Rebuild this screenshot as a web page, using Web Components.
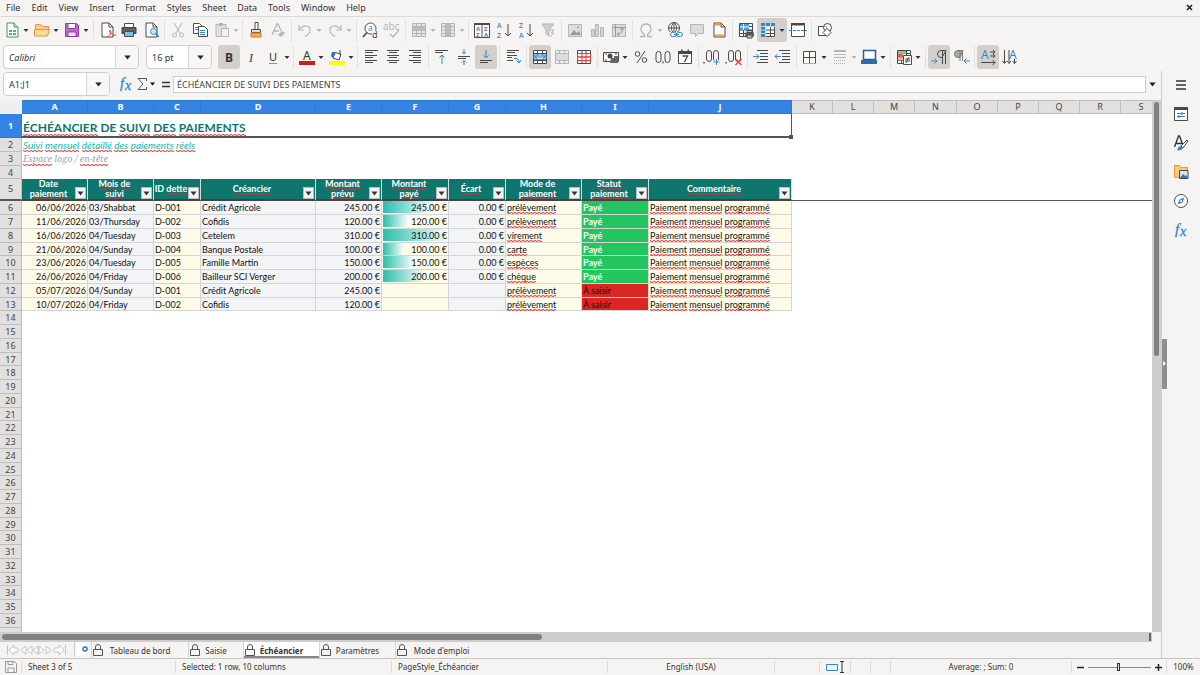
<!DOCTYPE html>
<html lang="en"><head><meta charset="utf-8"><title>Échéancier</title>
<style>body{margin:0;background:#f5f4f2}</style></head><body>
<calc-app></calc-app>
<script>
const TRI='<svg width="7" height="5" viewBox="0 0 7 5"><path d="M0.3 0.5H6.7L3.5 4.6z" fill="currentColor"/></svg>';
const K='#4a4a4a',B='#2f87cc',G='#b5b5b5';
const page=(s)=>`<path d="M5 3h7l4 4v10H5z" fill="#fff" stroke="${s}"/><path d="M12 3v4h4" fill="none" stroke="${s}"/>`;
const lines=(a,c=K)=>a.map(([x,y,w])=>`<path d="M${x} ${y}.5h${w}" stroke="${c}"/>`).join('');
const grid=(c,f='#fff')=>`<path d="M3.500 3.500h13v13h-13z" fill="${f}" stroke="${c}"/><path d="M3.500 6.500h13M3.500 13.500h13M7.500 3.500v13M12.500 3.500v13M3.500 10h13" stroke="${c}" fill="none"/>`;
const ICONS={
new:`<path d="M5 3h7l4 4v10H5z" fill="#fff" stroke="#3a9a55"/><path d="M12 3v4h4" fill="#cfe9d5" stroke="#3a9a55"/><path d="M7 10h7v5H7z" fill="#58b56e"/><path d="M7 12.500h7M10.500 10v5" stroke="#fff"/>`,
open:`<path d="M3.500 15.500v-11h5l2 2h6v3" fill="#f9cf8a" stroke="#e8943a"/><path d="M2.500 9.500h15l-2 6.500h-13z" fill="#fbd999" stroke="#e8943a"/>`,
save:`<path d="M3.500 3.500h11l2 2v11h-13z" fill="#b86cc7" stroke="#8e3fa3"/><path d="M6 3.500h7.500v5H6z" fill="#fff" stroke="#8e3fa3"/><path d="M6 12h8v4.500H6z" fill="#f1dff5" stroke="#8e3fa3"/>`,
pdf:page(K)+`<path d="M10 17c5-2 4-7 3-7s0 6 6 5" fill="none" stroke="#e03a3e"/>`,
print:`<path d="M5.500 3.500h9v4h-9z" fill="#fff" stroke="${K}"/><path d="M3 7.500h14v6H3z" fill="#5a6064" stroke="#3f4447"/><path d="M5.500 11.500h9v5h-9z" fill="#7cc0e8" stroke="${K}"/>`,
preview:page(K)+`<circle cx="12.500" cy="11.500" r="3" fill="#cfe6f6" stroke="${B}"/><path d="M14.800 13.800l3 3" stroke="${B}" stroke-width="1.500"/>`,
cut:`<path d="M6 3l6 10M14 3L8 13" stroke="${G}" fill="none"/><circle cx="6.500" cy="15" r="2" fill="none" stroke="${G}"/><circle cx="13.500" cy="15" r="2" fill="none" stroke="${G}"/>`,
copy:`<path d="M3.500 3.500h6l3 3v7h-9z" fill="#fff" stroke="${K}"/><path d="M8.500 6.500h6l3 3v7h-9z" fill="#fff" stroke="${K}"/>`+lines([[5,7,3],[5,9,3],[10,10,5],[10,12,5],[10,14,5]],B),
paste:`<path d="M4 4.500h10v12H4z" fill="#dedede" stroke="${G}"/><path d="M7 3h4v3H7z" fill="${G}"/><path d="M9.500 8.500h7v8h-7z" fill="#f2f2f2" stroke="${G}"/>`,
brush:`<path d="M9 2.500h3v7H9z" fill="#fff" stroke="${K}"/><path d="M5.500 9.500h9v3h-9z" fill="#ddd" stroke="${K}"/><path d="M5 13h10v4H5z" fill="#f6a95a" stroke="#d97a1d"/>`,
clear:`<path d="M4 15l5-11h1l3 7M6 11h5" fill="none" stroke="${G}" stroke-width="1.300"/><path d="M10 15l4-4 3 2-4 4z" fill="${G}"/>`,
undo:`<path d="M4 5v5h5M4 10c4-6 12-5 11 1-.5 3-3 4.500-5 5.500" fill="none" stroke="${G}" stroke-width="1.200"/>`,
redo:`<path d="M16 5v5h-5M16 10c-4-6-12-5-11 1 .5 3 3 4.500 5 5.500" fill="none" stroke="${G}" stroke-width="1.200"/>`,
find:`<circle cx="10.500" cy="8.500" r="5.500" fill="#fff" stroke="${K}"/><path d="M7 12.500l-4 4.500" stroke="${K}" stroke-width="1.600"/><text x="8" y="11" font-size="8" fill="${B}">a</text><path d="M12 11h6v7h-6z" fill="#f5f4f2"/><text x="12" y="18" font-size="9" fill="${K}">d</text>`,
spell:`<text x="1" y="10" font-size="10" fill="${G}">abc</text><path d="M8 14l3 3 6-7" fill="none" stroke="${G}" stroke-width="1.300"/>`,
row:grid(G,'#e6e6e6')+`<path d="M4 7h12v4H4z" fill="#bbb"/>`,
col:grid(G,'#e6e6e6')+`<path d="M8 4h4v12H8z" fill="#bbb"/>`,
sort:`<path d="M2.500 3.500h15v14h-15z" fill="#fff" stroke="${K}"/><path d="M2 3h16v2H2z" fill="${K}"/><path d="M10 4v13" stroke="${K}"/><g font-size="6" font-weight="700"><text x="4" y="11" fill="${B}">A</text><text x="4" y="17" fill="#a846b9">Z</text><text x="12" y="11" fill="#a846b9">Z</text><text x="12" y="17" fill="${B}">A</text></g>`,
az:`<g font-size="7" font-weight="500"><text x="3" y="8" fill="${B}">A</text><text x="3" y="18" fill="#a846b9">Z</text></g><path d="M14 4v12M11 13l3 3 3-3" fill="none" stroke="${K}"/>`,
za:`<g font-size="7" font-weight="500"><text x="3" y="8" fill="#a846b9">Z</text><text x="3" y="18" fill="${B}">A</text></g><path d="M14 4v12M11 13l3 3 3-3" fill="none" stroke="${K}"/>`,
filter:`<path d="M4 4h12l-5 6v6l-3-2v-4z" fill="#d0d0d0" stroke="${G}"/><path d="M12 10l4 0-3 3 3 0-4 4" fill="none" stroke="${G}"/>`,
image:`<path d="M3.500 4.500h13v12h-13z" fill="#dedede" stroke="${G}"/><path d="M5 15l4-5 3 3 2-2 2 4z" fill="#999"/><circle cx="13" cy="7.500" r="1" fill="#999"/>`,
chart:`<path d="M4.500 9.500h3v7h-3zM8.500 4.500h3v12h-3zM13.500 7.500h3v9h-3z" fill="#d4d4d4" stroke="${G}"/>`,
pivot:`<path d="M3.500 4.500h13v12h-13z" fill="#dedede" stroke="${G}"/><path d="M3.500 7.500h13M6.500 4.500v12M9 14c4 0 4-2 4-5M11 10l2-2 2 2M10 12l-2 2 2 2" fill="none" stroke="#999"/>`,
omega:`<path d="M4 16.500h4.500v-2C3 11 4.500 4 10 4s7 7 1.500 10.500v2H16" fill="none" stroke="${G}" stroke-width="1.300"/>`,
link:`<circle cx="9" cy="8" r="5.500" fill="#fff" stroke="${K}"/><path d="M3.500 8h11M9 2.500v11M9 2.500c-3.500 3-3.500 8 0 11M9 2.500c3.500 3 3.500 8 0 11" fill="none" stroke="${K}"/><path d="M5 12h13v5H5z" fill="#f5f4f2"/><rect x="5.500" y="12.500" width="6" height="4" rx="2" fill="none" stroke="${B}"/><rect x="11.500" y="12.500" width="6" height="4" rx="2" fill="none" stroke="${B}"/><path d="M9 14.500h5" stroke="${B}"/>`,
comment:`<path d="M3.500 4.500h13v9h-5l-3 3v-3h-5z" fill="#dcdcdc" stroke="${G}"/>`,
header:page(K)+`<path d="M6 4.500h6M6 15.500h9" stroke="#f29a3a" stroke-width="2"/>`,
printarea:grid(K)+`<path d="M4 4h9v6H4z" fill="#4b9cdb"/><path d="M4 7h9M7.500 4v6" stroke="#fff"/><path d="M9 12.500h9v4H9z" fill="#5a6064"/><path d="M11 10.500h5v2h-5zM11 15h5v3h-5z" fill="#9fd0ef" stroke="${K}"/>`,
freeze:grid(K)+`<path d="M3 3h14v4H3zM3 3h4.500v14H3z" fill="#2f87cc"/><path d="M3 10h4.500M3 13.500h4.500M12.500 3v4M3 6.500h14M7.500 3v14" stroke="#fff" stroke-width=".7"/>`,
split:`<path d="M3.500 3.500h13v13h-13z" fill="#fff" stroke="${K}"/><path d="M3 3h14v2.500H3z" fill="${K}"/><path d="M1 10.500h18" stroke="${B}" stroke-dasharray="3 1"/>`,
shapes:`<path d="M3.500 6.500h8v9h-8z" fill="#fff" stroke="${K}"/><circle cx="12.500" cy="7.500" r="4" fill="#fff" fill-opacity=".6" stroke="${K}"/><path d="M12 8.500l4 4-4 4-4-4z" fill="#fff" stroke="${K}"/>`,
bold:`<text x="6" y="14.500" font-size="12" font-weight="700" fill="#333">B</text>`,
italic:`<text x="8" y="14.500" font-size="12" font-style="italic" font-family="Liberation Serif" fill="#333">I</text>`,
underline:`<text x="6" y="13.500" font-size="11" fill="#333">U</text><path d="M6 16.500h8" stroke="#58a5dc"/>`,
fontcolor:`<text x="6" y="13" font-size="12" fill="#333">A</text><path d="M2 14h16v4H2z" fill="#c9211e"/>`,
fill:`<path d="M8 5.500l6 1.500-2 6-6-2z" fill="#fff" stroke="${K}"/><path d="M5 5l4 0-3 6-2-2z" fill="#2f72b5"/><path d="M13 3v5" stroke="${K}"/><path d="M2 14h16v4H2z" fill="#ff0"/>`,
left:lines([[4,3,13],[4,5,8],[4,8,12],[4,10,8],[4,13,12],[4,15,8]]),
center:lines([[4,3,12],[6,5,8],[4,8,12],[6,10,8],[4,13,12],[6,15,8]]),
right:lines([[4,3,12],[8,5,8],[4,8,12],[8,10,8],[4,13,12],[8,15,8]]),
top:lines([[3,3,13],[3,5,8]])+`<path d="M10 17V8M7.500 10.500L10 8l2.500 2.500" fill="none" stroke="${B}"/>`,
middle:lines([[4,9,12],[4,11,8]])+`<path d="M10 2v5M8 5l2 2 2-2M10 18v-4M8 15.500l2-2 2 2" fill="none" stroke="${B}"/>`,
bottom:lines([[4,13,12],[4,15,8]])+`<path d="M10 3v8M7.500 8.500L10 11l2.500-2.500" fill="none" stroke="${B}"/>`,
wrap:lines([[4,3,12],[4,5,8],[4,8,10],[4,10,5],[4,13,6]])+`<path d="M11 11.500h2c2 0 3 1 3 4M13.500 13.500l2.500 2.500 2-3" fill="none" stroke="${B}"/>`,
merge:grid(K)+`<path d="M4 8h12v4.500H4z" fill="#d6ebfa" stroke="${B}"/><path d="M5 10h10M7 8.500L5 10l2 1.500M13 8.500l2 1.500-2 1.500" fill="none" stroke="${B}"/>`,
merge2:grid(G,'#f0f0f0')+`<path d="M4 7h12v6H4z" fill="#dcdcdc"/>`,
unmerge:`<path d="M3.500 3.500h13v13h-13z" fill="#fff" stroke="${K}"/><path d="M3.500 6.500h13M8 3.500v3M12 3.500v3M8 13.500v3M12 13.500v3" stroke="${K}"/><path d="M3.500 6.500h13v3.500h-13zM3.500 10h13v3.500h-13zM8 6.500v7M12 6.500v7" fill="none" stroke="#d9413c"/>`,
currency:`<path d="M2.500 5.500h15v9h-15z" fill="#fff" stroke="${K}"/><circle cx="9" cy="9" r="2.500" fill="${K}"/><path d="M10 11h3v-2h4v7h-8z" fill="#666"/><path d="M4 7h2M4 13h2M14 7h2" stroke="${K}"/>`,
percent:`<circle cx="6.500" cy="7" r="2.300" fill="none" stroke="${K}"/><circle cx="13.500" cy="13" r="2.300" fill="none" stroke="${K}"/><path d="M14 4L6 16" stroke="${K}"/>`,
num:`<rect x="3" y="4.500" width="5" height="11" rx="2.500" fill="none" stroke="${K}"/><rect x="12" y="4.500" width="5" height="11" rx="2.500" fill="none" stroke="${K}"/><path d="M10 14v2.500" stroke="${K}"/>`,
date:`<path d="M3.500 4.500h13v12h-13z" fill="#fff" stroke="${K}"/><path d="M3 4h14v3H3zM6 2.500h1.500v3H6zM12.500 2.500H14v3h-1.500z" fill="${K}"/><path d="M7.500 9h5l-3 6" fill="none" stroke="${K}" stroke-width="1.300"/>`,
adddec:`<path d="M2 15v1.500" stroke="${K}" stroke-width="1.500"/><rect x="4.500" y="3.500" width="5" height="11" rx="2.500" fill="none" stroke="${K}"/><rect x="11.500" y="3.500" width="5" height="11" rx="2.500" fill="none" stroke="${K}"/><path d="M11 15h7M14.500 11.500v7" stroke="#f5f4f2" stroke-width="3"/><path d="M11.500 15h6M14.500 12v6" stroke="${B}"/>`,
deldec:`<path d="M2 15v1.500" stroke="${K}" stroke-width="1.500"/><rect x="4.500" y="3.500" width="5" height="11" rx="2.500" fill="none" stroke="${K}"/><rect x="11.500" y="3.500" width="5" height="11" rx="2.500" fill="none" stroke="${K}"/><path d="M11.500 12l6 6M17.500 12l-6 6" stroke="#e03a3e" stroke-width="1.200"/>`,
indent:lines([[6,3,11],[9,6,8],[9,9,8],[9,12,8],[6,15,11]])+`<path d="M2 9.500h6M5.500 7L8 9.500 5.500 12" fill="none" stroke="${B}"/>`,
outdent:lines([[6,3,11],[9,6,8],[9,9,8],[9,12,8],[6,15,11]])+`<path d="M2 9.500h6M4.500 7L2 9.500 4.500 12" fill="none" stroke="${B}"/>`,
borders:`<path d="M3.500 4.500h12v12h-12zM9.500 4.500v12M3.500 10.500h12" fill="#fff" stroke="${K}"/><path d="M3 16.500h13" stroke="#f29a3a"/>`,
linestyle:lines([[4,3,12],[4,4,12],[4,7,12],[4,10,12]],G)+`<path d="M4 13.500h12M4 16.500h12" stroke="${G}" stroke-dasharray="1 1"/>`,
bordercolor:`<path d="M4.500 3.500h12v9h-12z" fill="#fff" stroke="#2a5f93" stroke-width="1.500"/><path d="M2 13h16v4H2z" fill="#2a6db0"/>`,
cond:grid(K)+`<path d="M4 4h8v3H4z" fill="#7cc98c"/><path d="M4 7h5v3H4z" fill="#e2625d"/><path d="M4 10.500h5v3H4z" fill="#f0b0ac"/><path d="M9.500 8.500h8v9h-8z" fill="#fff" stroke="${K}"/><path d="M11 12h5M11 14h5M15 10l-3 6" stroke="${K}"/>`,
ltr:`<path d="M17 3.500H12a3 3 0 0 0 0 7h1zM13.500 4v13M16.500 4v13" fill="none" stroke="${K}"/><path d="M2 14h6M5.500 11.500L8 14l-2.500 2.500" fill="none" stroke="${B}"/>`,
rtl:`<path d="M12 3.500H7a3 3 0 0 0 0 7h2z" fill="#aaa" stroke="#777"/><path d="M9 4v10M11.500 4v10" stroke="#777"/><path d="M13 14h6M15.500 11.500L13 14l2.500 2.500" fill="none" stroke="${B}"/>`,
hdir:`<text x="3" y="12" font-size="12" fill="${B}">A</text><path d="M12 5h5M12 9h5M3 15.500h14M15 3l2 2-2 2M15 7l2 2-2 2M14.500 13l2.500 2.500-2.500 2.500" fill="none" stroke="${K}"/>`,
vdir:`<text x="9" y="12" font-size="12" fill="${B}">A</text><path d="M4.500 3v13M9 3v13M14.500 12v5M2.500 14l2 2.500 2-2.500M7 14l2 2.500 2-2.500M12.500 14l2 2.500 2-2.500" fill="none" stroke="${K}"/>`,
fx:`<text x="4" y="14" font-size="15" font-style="italic" font-family="Liberation Serif" stroke="${B}" stroke-width=".3" fill="${B}">f</text><text x="9" y="16" font-size="14" font-style="italic" font-family="Liberation Serif" stroke="${B}" stroke-width=".3" fill="${B}">x</text>`,
sigma:`<path d="M14.500 7V4.500H6l5 5.500-5 5.500h8.500V13" fill="none" stroke="#555"/>`,
equal:`<path d="M6 8.500h8M6 12.500h8" stroke="#333" stroke-width="1.500"/>`,
menu:`<path d="M5 6h10M5 10h10M5 14h10" stroke="#333" stroke-width="1.500"/>`,
props:`<path d="M3.500 3.500h13v13h-13z" fill="#fff" stroke="${K}"/><path d="M3 3h14v3H3z" fill="${K}"/><path d="M6 9.500h8M6 12.500h8M11 8v3M8 11v3" stroke="${B}"/>`,
styles:`<path d="M3.500 14l4-11h1l3 8M5 10.500h6" fill="none" stroke="#333" stroke-width="1.400"/><path d="M10 13l6-6 1 1-5 7z" fill="#fff" stroke="${K}"/><path d="M6 17c1-1 1-4 4-4l2 2c-1 2-4 3-6 2z" fill="${B}"/>`,
gallery:`<path d="M3.500 15.500v-12h5l2 2h6v10z" fill="#f9c87a" stroke="#e8943a"/><path d="M8.500 8.500h8.500v8H8.500z" fill="#cfe6f6" stroke="${K}"/><path d="M9 16l3-4 2 2 1-1 2 3z" fill="#2f72b5"/>`,
nav:`<circle cx="10" cy="10" r="6.500" fill="#fff" stroke="${K}"/><path d="M13.500 6.500l-2 5-5 2 2-5z" fill="${B}"/><circle cx="10" cy="10" r="1" fill="#fff"/>`,
lock:`<path d="M5.500 9.500h9v6h-9z" fill="none" stroke="#555"/><path d="M7.500 9V7a2.500 2.500 0 0 1 5 0v2" fill="none" stroke="#555"/>`,
floppy:`<path d="M4.500 4.500h9l2 2v9h-11z" fill="none" stroke="#999"/><path d="M7 4.500h5v3H7zM7 11h6v4.500H7z" fill="none" stroke="#999"/>`
};
const def=(n,html)=>customElements.define(n,class extends HTMLElement{
 constructor(){super();this.attachShadow({mode:'open'})}
 connectedCallback(){this.shadowRoot.innerHTML=typeof html==='function'?html(this):html}});
def('ui-icon',e=>`<style>:host{display:block;width:20px;height:20px;font-family:"Noto Sans",sans-serif}svg{display:block}</style><svg width="20" height="20" viewBox="0 0 20 20" aria-hidden="true">${ICONS[e.getAttribute('name')]}</svg>`);
def('tool-button',e=>{const s=e.hasAttribute('split');return`<style>:host{display:block;flex:none}
button{all:unset;box-sizing:border-box;display:flex;align-items:center;height:24px;width:${s?(e.hasAttribute('compact')?29:30):22}px;padding-left:1px;border-radius:3px;color:${e.hasAttribute('off')?'#b5b5b5':'#333'}}
:host([on]) button{background:#d3d0cc}svg{display:block;flex:none}</style><button type="button" aria-label="${e.getAttribute('name')}"><ui-icon name="${e.getAttribute('name')}"></ui-icon>${s?'<svg width="7" height="5" viewBox="0 0 7 5"><path d="M1.500 1h5L4 4z" fill="currentColor"/></svg>':''}</button>`});
def('tool-sep','<style>:host{display:block;flex:none;width:5px}i{display:block;width:1px;height:22px;margin-left:2px;background:#e3e1df}</style><i></i>');
def('tool-row',`<style>:host{display:flex;align-items:center;flex:none;overflow:hidden}</style><slot></slot>`);
def('combo-box',e=>`<style>:host{display:block;flex:none;width:var(--w)}
div{box-sizing:border-box;display:flex;height:24px;border:1px solid #cfccc9;border-radius:4px;background:#fff;overflow:hidden}
input{all:unset;flex:1;min-width:0;padding-left:5px;font:var(--st,normal) 9px "Noto Sans",sans-serif;color:#2e3436}
button{all:unset;flex:none;width:22px;border-left:1px solid #d8d5d2;background:#f8f7f6;display:grid;place-items:center;color:#222}</style>
<div><input aria-label="${e.getAttribute('label')}" value="${e.getAttribute('value')}"><button type="button" aria-label="Open ${e.getAttribute('label')}">${TRI}</button></div>`);
def('menu-bar',`<style>:host{display:flex;align-items:center;height:16px;padding:0 6px;border-bottom:1px solid #dddbd9;flex:none;font:9px/16px "Noto Sans",sans-serif;color:#333}
nav{display:flex;gap:11px;flex:1}button{all:unset}.x{width:8px}</style>
<nav>${'File Edit View Insert Format Styles Sheet Data Tools Window Help'.split(' ').map(t=>`<button>${t}</button>`).join('')}</nav><button class="x" aria-label="Close"><svg width="7" height="7" viewBox="0 0 7 7"><path d="M1 1l5 5M6 1L1 6" stroke="#222" stroke-width="1.600"/></svg></button>`);
const btns=s=>s.trim().split(/\s+/).map(t=>{if(t==='|')return'<tool-sep></tool-sep>';const[n,...f]=t.split('.');
 return`<tool-button name="${n}" ${f.join(' ')}></tool-button>`}).join('');
def('formula-bar',`<style>:host{display:flex;align-items:center;height:26px;padding-left:3px;flex:none}
.f{all:unset;box-sizing:border-box;flex:1;min-width:0;height:17px;border:1px solid #cfccc9;background:#fff;padding-left:3px;font:9px "Noto Sans",sans-serif;color:#444}
button{all:unset;display:grid;place-items:center;width:16px;height:20px;color:#222;flex:none}.d{width:8px}.g{margin-left:6px}.q{width:17px}.e{width:13px;margin-right:2px}</style>
<combo-box label="Name box" value="A1:J1" style="--w:107px"></combo-box>
<button class="g" aria-label="Function wizard"><ui-icon name="fx"></ui-icon></button><button aria-label="Sum"><ui-icon name="sigma"></ui-icon></button><button class="d" aria-label="More sums"><svg width="5" height="4"><path d="M0 .5h5L2.500 3.500z"/></svg></button><button class="q" aria-label="Formula"><ui-icon name="equal"></ui-icon></button>
<input class="f" aria-label="Input line" value="ÉCHÉANCIER DE SUIVI DES PAIEMENTS"><button class="e" aria-label="Expand">${TRI}</button>`);
const COLS=[66,66,47,115,66,67,57,76,67,143,41,41,41,42,41,41,41,41,41];
const TOTAL=22+COLS.reduce((a,b)=>a+b);
const LET='ABCDEFGHIJKLMNOPQRS';
const sp=t=>t.split(' ').map(w=>`<u>${w}</u>`).join(' ');
const HEAD=['Date<br><u>paiement</u>','<u>Mois</u> <u>de</u><br><u>suivi</u>','ID <u>dette</u>',sp('Créancier'),'<u>Montant</u><br><u>prévu</u>','<u>Montant</u><br><u>payé</u>',sp('Écart'),'Mode de<br><u>paiement</u>','<u>Statut</u><br><u>paiement</u>',sp('Commentaire')];
const DATA=[['06/06/2026','03/Shabbat','D-001','Crédit Agricole','245.00 €','245.00 €','0.00 €','prélèvement'],
['11/06/2026','03/Thursday','D-002','Cofidis','120.00 €','120.00 €','0.00 €','prélèvement'],
['16/06/2026','04/Tuesday','D-003','Cetelem','310.00 €','310.00 €','0.00 €','virement'],
['21/06/2026','04/Sunday','D-004','Banque Postale','100.00 €','100.00 €','0.00 €','carte'],
['23/06/2026','04/Tuesday','D-005','Famille Martin','150.00 €','150.00 €','0.00 €','espèces'],
['26/06/2026','04/Friday','D-006','Bailleur SCI Verger','200.00 €','200.00 €','0.00 €','chèque'],
['05/07/2026','04/Sunday','D-001','Crédit Agricole','245.00 €','','','prélèvement'],
['10/07/2026','04/Friday','D-002','Cofidis','120.00 €','','','prélèvement']];
const dataRow=r=>r.map((v,i)=>{const bar=i===5&&v?` style="--bar:${Math.round(parseFloat(v)/310*100)}%"`:'';
 return`<td class="${[0,2,5,7].includes(i)?'in':'calc'}${[0,4,5,6].includes(i)?' r':''}${bar?' bar':''}"${bar}>${i===7?sp(v):v}</td>`}).join('')
 +(r[5]?'<td class="ok">Payé</td>':'<td class="ko">À saisir</td>')+`<td class="in">${sp('Paiement mensuel programmé')}</td><td colspan="9"></td>`;
def('sheet-grid',()=>{let rows='';
 for(let n=1;n<=37;n++){let c='<td colspan="19"></td>';
  if(n===1)c=`<td colspan="10" class="title">${sp('ÉCHÉANCIER')} DE ${sp('SUIVI DES PAIEMENTS')}<i></i></td><td colspan="9"></td>`;
  if(n===2)c=`<td colspan="19" class="sub">${sp('Suivi mensuel détaillé des paiements réels')}</td>`;
  if(n===3)c=`<td colspan="19" class="logo"><u>Espace</u> logo / <u>en-tête</u></td>`;
  if(n===5)c=HEAD.map((h,i)=>`<td class="h"><div><span>${h}</span><button aria-label="Filter ${LET[i]}"><svg width="7" height="5" viewBox="0 0 7 5"><path d="M0.5 0.5h6L3.500 4.500z" fill="#333"/></svg></button></div></td>`).join('')+'<td colspan="9" class="fz"></td>';
  if(n>5&&n<14)c=dataRow(DATA[n-6]);
  rows+=`<tr class="${n<6?'r'+n:n%4===1?'s':'n'}"><th scope="row">${n<37?n:''}</th>${c}</tr>`}
 return`<style>:host{display:block;flex:1;min-width:0;overflow:hidden;background:#fff;font:9px/12px Lato,sans-serif;color:#111}
table{table-layout:fixed;border-spacing:0;width:${TOTAL}px}
td,th{box-sizing:border-box;padding:0 1px;white-space:nowrap;overflow:visible;vertical-align:middle}
th{font:9px/12px "Noto Sans",sans-serif;color:#444;background:#e1e0df;border:0 solid #bfbebd;border-right-width:1px;border-bottom-width:1px;padding:0}
thead tr{height:14px}thead th{border-top-width:1px}.sel{background:#3584e4;color:#fff;font-weight:700;border-color:#2f78d0}.corner{background:#f0efee;border:0}
.r1{height:24px}.r2,.r3,.n{height:14px}.r4,.s{height:13px}.r5{height:22px}.r1 th{background:#3584e4;color:#fff;font-weight:700;border-color:#2f78d0}
.s td,.s th,.r4 th{line-height:11px}
u{text-decoration:none;padding-bottom:1px;background:url("data:image/svg+xml,%3Csvg xmlns='http://www.w3.org/2000/svg' width='4' height='2'%3E%3Cpath d='M0 .5L2 1.500L4 .5' fill='none' stroke='%23e22' stroke-width='1'/%3E%3C/svg%3E") repeat-x left bottom}
.title{position:relative;border-right:1px solid #555;border-bottom:2px solid #555;font:700 12px/16px Lato,sans-serif;color:#0f766e;padding-top:6px}
.title i{position:absolute;right:-2px;bottom:-3px;width:4px;height:4px;background:#555}
.sub{font-style:italic;font-size:10px;color:#14b8a6}.logo{font:italic 9px/12px "Noto Serif","Liberation Serif",serif;color:#9ca3af}
.h{background:#0f766e;color:#fff;font-weight:700;line-height:10px;text-align:center;border-right:1px solid #cfe0de;border-bottom:2px solid #444;padding:0}
.h div{display:grid;grid-template-columns:1fr 12px;align-items:end;height:20px;overflow:hidden}.h span{align-self:center}
.h button{all:unset;box-sizing:border-box;width:11px;height:12px;background:#f4f4f4;border:1px solid #bbb;display:grid;place-items:center}
.fz{border-bottom:1px solid #555}.r5 th{border-bottom:2px solid #555}
.in,.calc{border-right:1px solid #d3d5d8;border-bottom:1px solid #d3d5d8}.in{background-color:#fffbe9}.calc{background-color:#f3f4f6}.r{text-align:right}
.bar{background:linear-gradient(90deg,#2bbfae,#ffffffd0) 1px 0/var(--bar) 12px no-repeat,#fffbe9}
.ok{background:#22c55e;color:#fff;font-weight:700;border-bottom:1px solid #d3d5d8;border-right:1px solid #d3d5d8}.ko{background:#dc2626;color:#111;border-bottom:1px solid #d3d5d8;border-right:1px solid #d3d5d8}
</style><table><colgroup><col style="width:22px">${COLS.map(w=>`<col style="width:${w}px">`).join('')}</colgroup>
<thead><tr><th class="corner"></th>${[...LET].map((l,i)=>`<th scope="col" class="${i<10?'sel':''}">${l}</th>`).join('')}</tr></thead><tbody>${rows}</tbody></table>`});
def('sheet-tabs',`<style>:host{display:flex;height:16px;flex:none;font:8px/15px "Noto Sans",sans-serif;color:#333}
.nav{display:flex;align-items:center;width:74px;box-sizing:border-box;padding-left:6px}.add{all:unset;width:16px;height:15px;border-left:1px solid #ccc}
button.t{all:unset;display:flex;align-items:center;box-sizing:border-box;height:16px;padding-right:14px;border-left:1px solid #d8d6d4}
.t span{flex:1;text-align:center}.t ui-icon{margin:-3px -2px -3px -4px}.t.on{background:#fff;font-weight:700;box-shadow:inset 0 -2px #888}</style>
<div class="nav"><svg width="60" height="12" viewBox="0 0 60 12" fill="#fff" stroke="#c4c4c4"><path d="M1.500 1v10M3 6l5-5v3h4v4H8v3zM15 6l5-4v8zM21 6l5-4v8zM27 6l5-4v8zM33 2l5 4-5 4zM40 2l5 4-5 4zM58 6l-5-5v3h-5v4h5v3zM59.500 1v10"/></svg></div>
<button class="add" aria-label="Add sheet"><svg width="14" height="15" viewBox="0 0 14 15"><path d="M1 0h9v14H1z" fill="#fff"/><circle cx="10" cy="7" r="2" fill="none" stroke="#2f72b5" stroke-width="1.500"/></svg></button>
${[['Tableau de bord',97],['Saisie',55],['Échéancier',76],['Paramètres',76],["Mode d'emploi",92]].map(([t,w],i)=>`<button class="t ${i===2?'on':''}" style="width:${w}px"><ui-icon name="lock"></ui-icon><span>${t}</span></button>`).join('')}`);
def('status-bar',`<style>:host{display:flex;align-items:center;height:17px;flex:none;border-top:1px solid #c6c4c2;box-sizing:border-box;font:8px/15px "Noto Sans",sans-serif;color:#333}
div{box-sizing:border-box;height:12px;line-height:12px;border-right:1px solid #dedcda;padding-left:6px;flex:none}
input{all:unset;-webkit-appearance:none;appearance:none;width:63px;height:11px;background:linear-gradient(#888,#888) 0 5px/100% 1px no-repeat}
input::-webkit-slider-thumb{-webkit-appearance:none;width:3px;height:8px;box-sizing:border-box;border:1px solid #333;background:#ddd}
.z{flex:1;min-width:0;display:flex;align-items:center;gap:4px;padding:0;justify-content:center}.c{text-align:center;padding:0}button{all:unset;display:grid}.i ui-icon{margin:-4px 0 -4px 1px}</style>
<div class="i" style="width:22px;padding:0">
<ui-icon name="floppy"></ui-icon></div><div style="width:154px">Sheet 3 of 5</div><div style="width:216px">Selected: 1 row, 10 columns</div><div style="width:216px">PageStyle_Échéancier</div><div class="c" style="width:167px">English (USA)</div><div style="width:45px"></div><div style="width:31px"><svg width="21" height="12" viewBox="0 0 21 12" fill="none"><path d="M.5 3.500h11v6H.5z" stroke="#2f87cc"/><path d="M14 .5h4M16 .5v11M14 11.500h4" stroke="#333"/></svg></div><div style="width:20px"></div><div style="width:20px"></div><div class="c" style="width:181px">Average: ; Sum: 0</div>
<div class="z"><button aria-label="Zoom out"><svg width="7" height="7"><path d="M0 3.500h7" stroke="#222" stroke-width="1.500"/></svg></button><input type="range" aria-label="Zoom" value="49"><button aria-label="Zoom in"><svg width="7" height="7"><path d="M0 3.500h7M3.500 0v7" stroke="#222" stroke-width="1.500"/></svg></button></div><div class="c" style="width:33px;border:0">100%</div>`);
def('calc-app',`<style>:host{display:flex;flex-direction:column;height:100vh;background:#f5f4f2;overflow:hidden}
.t1{height:26px}.t2{height:28px}.main{flex:1;min-height:0;display:flex}.left{flex:1;min-width:0;display:flex;flex-direction:column}
.sheet{flex:1;min-height:0;display:flex;margin-top:3px}.vs{width:9px;background:#cdcdcd;flex:none}.vs i{display:block;width:5px;height:254px;margin:2px;border-radius:3px;background:#808080}
.hs{height:10px;background:#cdcdcd;margin-right:9px;display:flex;align-items:center;justify-content:space-between;flex:none}.hs i{display:block;width:540px;height:6px;margin-left:2px;border-radius:3px;background:#808080}.hs b{width:2px;height:8px;margin-right:1px;background:#666}
aside{box-sizing:border-box;width:39px;flex:none;border-left:1px solid #cfcdcb;display:flex;align-items:center}
.grip{width:5px;height:50px;background:#8f8f8f;align-self:center;margin-bottom:2px;display:grid;place-items:center}.icons{align-self:start;display:flex;flex-direction:column;gap:5px;padding:2px 0 0 3px}</style>
<menu-bar></menu-bar>
<tool-row class="t1" style="padding-left:1px">${btns('new.split open.split save.split | pdf print preview | cut copy paste.split.off.compact | brush clear | undo.split.off redo.split.off | find spell | row.split.off.compact col.split.off.compact | sort az za filter | image chart pivot | omega.split.off.compact link comment header | printarea freeze.split.on split | shapes')}</tool-row>
<tool-row class="t2" style="padding-left:3px"><combo-box label="Font name" value="Calibri" style="--w:136px;--st:italic;margin-right:7px"></combo-box><combo-box label="Font size" value="16 pt" style="--w:66px;margin-right:6px"></combo-box>${btns('bold.on italic underline.split.compact | fontcolor.split fill.split.compact | left center right | top middle bottom.on | wrap | merge.on merge2 unmerge | currency.split percent num date | adddec deldec | indent outdent | borders.split linestyle.split.off.compact bordercolor.split | cond.split | ltr.on rtl | hdir.on vdir')}</tool-row>
<div class="main"><div class="left"><formula-bar></formula-bar><div class="sheet"><sheet-grid></sheet-grid><div class="vs"><i></i></div></div><div class="hs"><i></i><b></b></div><sheet-tabs></sheet-tabs></div>
<aside><div class="grip"><svg width="3" height="5"><path d="M0 0l3 2.500L0 5z" fill="#fff"/></svg></div><div class="icons">${['menu','props','styles','gallery','nav','fx'].map(n=>`<tool-button name="${n}"></tool-button>`).join('')}</div></aside></div>
<status-bar></status-bar>`);
</script></body></html>
